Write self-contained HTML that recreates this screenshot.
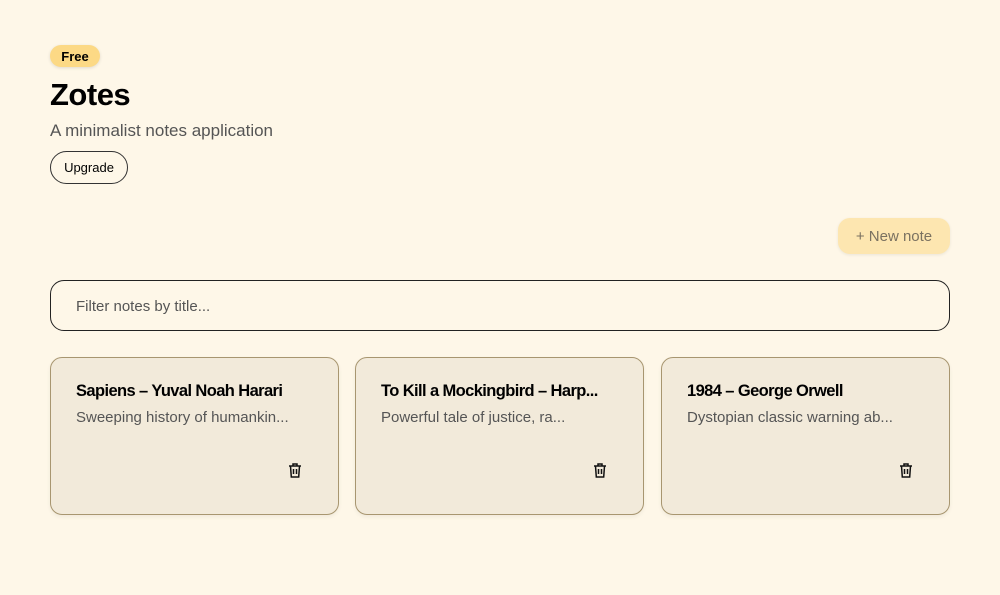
<!DOCTYPE html>
<html><head><style>
*{box-sizing:border-box;margin:0;padding:0}
body{width:1000px;height:595px;background:#fef7e8;font-family:"Liberation Sans",sans-serif;position:relative;overflow:hidden;color:#000}
.badge{position:absolute;left:50px;top:45px;width:50px;height:22px;border-radius:11px;background:#fcd985;font-size:13px;font-weight:bold;line-height:23px;text-align:center;box-shadow:0 1px 3px rgba(0,0,0,.12)}
h1{position:absolute;left:50px;top:77px;font-size:31px;font-weight:bold;letter-spacing:-0.5px}
.sub{position:absolute;left:50px;top:121px;font-size:17px;color:#555}
.up{position:absolute;left:50px;top:151px;width:78px;height:33px;border:1px solid #333;border-radius:17px;font-size:13px;line-height:31px;text-align:center}
.new{position:absolute;left:838px;top:218px;width:112px;height:36px;border-radius:12px;background:#fde6b0;color:#7a7160;font-size:15px;line-height:38px;text-align:center;box-shadow:0 1px 3px rgba(0,0,0,.08)}
.filter{position:absolute;left:50px;top:280px;width:900px;height:51px;border:1px solid #222;border-radius:14px;font-size:15px;color:#555;line-height:52px;padding-left:25px}
.card{position:absolute;top:357px;width:289px;height:158px;background:#f2eada;border:1px solid #a89670;border-radius:12px;box-shadow:0 2px 4px rgba(0,0,0,.06)}
.card b{position:absolute;left:25px;top:24px;font-size:16.5px;letter-spacing:-0.6px;font-weight:600}
.card p{position:absolute;left:25px;top:51px;font-size:15px;color:#555}
.card svg{position:absolute;left:236px;top:104px}
</style></head><body>
<div class="badge">Free</div>
<h1>Zotes</h1>
<div class="sub">A minimalist notes application</div>
<div class="up">Upgrade</div>
<div class="new">+ New note</div>
<div class="filter">Filter notes by title...</div>
<div class="card" style="left:50px"><b>Sapiens – Yuval Noah Harari</b><p>Sweeping history of humankin...</p><svg width="16" height="17" viewBox="0 0 16 17" fill="none" stroke="#111" stroke-width="1.5"><path d="M2 4h12M6 4V2h4v2M3.5 4l.8 11h7.4l.8-11M6.5 7v5M9.5 7v5"/></svg></div>
<div class="card" style="left:355px"><b>To Kill a Mockingbird – Harp...</b><p>Powerful tale of justice, ra...</p><svg width="16" height="17" viewBox="0 0 16 17" fill="none" stroke="#111" stroke-width="1.5"><path d="M2 4h12M6 4V2h4v2M3.5 4l.8 11h7.4l.8-11M6.5 7v5M9.5 7v5"/></svg></div>
<div class="card" style="left:661px"><b>1984 – George Orwell</b><p>Dystopian classic warning ab...</p><svg width="16" height="17" viewBox="0 0 16 17" fill="none" stroke="#111" stroke-width="1.5"><path d="M2 4h12M6 4V2h4v2M3.5 4l.8 11h7.4l.8-11M6.5 7v5M9.5 7v5"/></svg></div>
</body></html>
